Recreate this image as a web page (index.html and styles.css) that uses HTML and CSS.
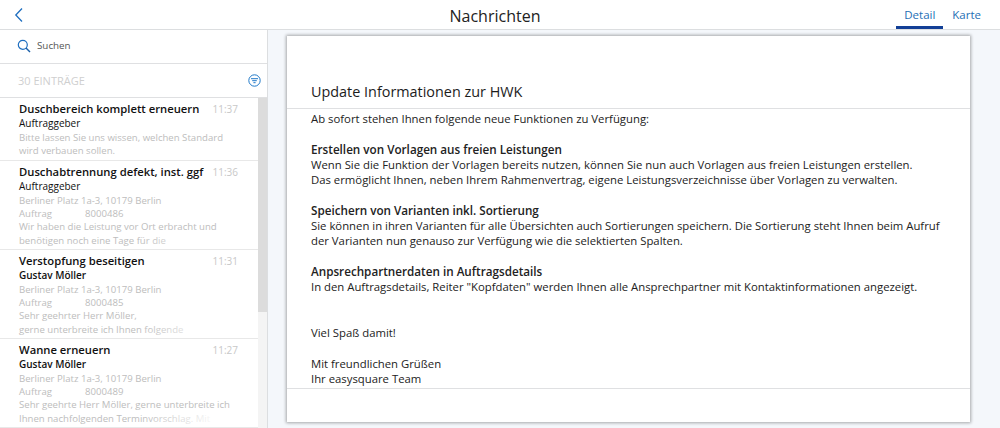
FILE: index.html
```html
<!DOCTYPE html>
<html lang="de">
<head>
<meta charset="utf-8">
<title>Nachrichten</title>
<link rel="stylesheet" href="styles.css">
</head>
<body>
<div class="app">
  <header class="topbar">
    <a class="back" aria-label="Zurück"><svg width="10" height="16" viewBox="0 0 10 16"><path d="M8 1.500 1.800 8 8 14.500" fill="none" stroke="#1f6fc0" stroke-width="1.300"/></svg></a>
    <h1 class="page-title">Nachrichten</h1>
    <nav class="tabs">
      <a class="tab active">Detail</a>
      <a class="tab">Karte</a>
    </nav>
  </header>
  <main class="main">
    <aside class="sidebar">
      <div class="search">
        <svg width="14" height="14" viewBox="0 0 14 14"><circle cx="5.800" cy="5.800" r="4.500" fill="none" stroke="#1f6fc0" stroke-width="1.200"/><path d="M9 9l4 4" stroke="#1a5fa8" stroke-width="1.500"/></svg>
        <span>Suchen</span>
      </div>
      <div class="count">
        <span>30 EINTRÄGE</span>
        <svg width="13" height="13" viewBox="0 0 13 13"><circle cx="6.500" cy="6.500" r="5.700" fill="none" stroke="#1f78c8" stroke-width="1"/><path d="M3 4.700h7M4.200 6.700h4.600M5.400 8.700h2.200" stroke="#1f78c8" stroke-width="1"/></svg>
      </div>
      <div class="list-wrap">
        <ul class="list">
          <li class="item item-short">
            <div class="item-head"><strong>Duschbereich komplett erneuern</strong><time>11:37</time></div>
            <div class="sender">Auftraggeber</div>
            <p>Bitte lassen Sie uns wissen, welchen Standard<br>wird verbauen sollen.</p>
          </li>
          <li class="item">
            <div class="item-head"><strong>Duschabtrennung defekt, inst. ggf</strong><time>11:36</time></div>
            <div class="sender">Auftraggeber</div>
            <p>Berliner Platz 1a-3, 10179 Berlin<br><span class="label">Auftrag</span>8000486<br>Wir haben die Leistung vor Ort erbracht und<br>benötigen noch eine Tage für die</p>
          </li>
          <li class="item">
            <div class="item-head"><strong>Verstopfung beseitigen</strong><time>11:31</time></div>
            <div class="sender strong-sender">Gustav Möller</div>
            <p>Berliner Platz 1a-3, 10179 Berlin<br><span class="label">Auftrag</span>8000485<br>Sehr geehrter Herr Möller,<br>gerne unterbreite ich Ihnen folgende</p>
          </li>
          <li class="item">
            <div class="item-head"><strong>Wanne erneuern</strong><time>11:27</time></div>
            <div class="sender strong-sender">Gustav Möller</div>
            <p>Berliner Platz 1a-3, 10179 Berlin<br><span class="label">Auftrag</span>8000489<br>Sehr geehrte Herr Möller, gerne unterbreite ich<br>Ihnen nachfolgenden Terminvorschlag. Mit</p>
          </li>
        </ul>
        <div class="scrollbar"><div class="thumb"></div></div>
      </div>
    </aside>
    <section class="content">
      <article class="card">
        <h2 class="card-title">Update Informationen zur HWK</h2>
        <div class="card-body">
          <p>Ab sofort stehen Ihnen folgende neue Funktionen zu Verfügung:</p>
          <p><b>Erstellen von Vorlagen aus freien Leistungen</b><br>Wenn Sie die Funktion der Vorlagen bereits nutzen, können Sie nun auch Vorlagen aus freien Leistungen erstellen.<br>Das ermöglicht Ihnen, neben Ihrem Rahmenvertrag, eigene Leistungsverzeichnisse über Vorlagen zu verwalten.</p>
          <p><b>Speichern von Varianten inkl. Sortierung</b><br>Sie können in ihren Varianten für alle Übersichten auch Sortierungen speichern. Die Sortierung steht Ihnen beim Aufruf<br>der Varianten nun genauso zur Verfügung wie die selektierten Spalten.</p>
          <p><b>Anpsrechpartnerdaten in Auftragsdetails</b><br>In den Auftragsdetails, Reiter "Kopfdaten" werden Ihnen alle Ansprechpartner mit Kontaktinformationen angezeigt.</p>
          <p class="gap-top">Viel Spaß damit!</p>
          <p>Mit freundlichen Grüßen<br>Ihr easysquare Team</p>
        </div>
      </article>
    </section>
  </main>
</div>
</body>
</html>
```
FILE: styles.css
```css
* { box-sizing: border-box; margin: 0; padding: 0; }
html, body { width: 1000px; height: 428px; overflow: hidden; background: #fff; }
body { font-family: "Open Sans", "Liberation Sans", sans-serif; color: #1c1c1c; }
.app { display: flex; flex-direction: column; height: 428px; }

.topbar { height: 30px; flex: none; display: flex; align-items: center; position: relative; border-bottom: 1px solid #dcdee0; padding-left: 14px; }
.back { display: flex; width: 10px; height: 16px; margin-top: 0; }
.page-title { position: absolute; right: 0; top: 4px; left: -10px; text-align: center; font-size: 16px; line-height: 24px; font-weight: 400; color: #222; pointer-events: none; }
.tabs { margin-left: auto; display: flex; height: 29px; padding-right: 19px; }
.tab { font-size: 11.500px; line-height: 16px; padding-top: 7px; color: #1f6fb5; }
.tab.active { width: 47px; text-align: center; border-bottom: 3px solid #123f96; margin-right: 9px; }

.main { flex: 1; display: flex; min-height: 0; background: #f4f7fb; }
.sidebar { width: 268px; flex: none; background: #fff; border-right: 1px solid #dcdee0; display: flex; flex-direction: column; }
.search { height: 34px; flex: none; display: flex; align-items: center; gap: 6px; padding: 0 0 3px 17px; font-size: 9.800px; color: #555; border-bottom: 1px solid #dfe0e2; }
.search svg { margin-top: 1px; }
.count { height: 34px; flex: none; display: flex; justify-content: space-between; align-items: center; padding: 0 6px 0 18px; font-size: 11px; color: #cfcfcf; border-bottom: 1px solid #dfe0e2; }

.list-wrap { flex: 1; display: flex; min-height: 0; overflow: hidden; }
.list { flex: 1; list-style: none; min-width: 0; }
.item { height: 89px; padding: 3px 10px 0 19px; border-bottom: 1px solid #e8e8e8; position: relative; }
.item-short { height: 63px; }
.item-head { display: flex; justify-content: space-between; align-items: baseline; padding-right: 10px; }
.item-head strong { font-size: 11.250px; line-height: 15px; font-weight: 600; color: #111; white-space: nowrap; }
.item-head time { font-size: 10px; color: #c8c8c8; }
.sender { font-size: 10px; line-height: 14px; color: #111; }
.strong-sender { font-weight: 600; }
.item p { margin-top: 1px; font-size: 9.600px; line-height: 13.200px; color: #bdbdbd; white-space: nowrap; }
.item::after { content: ""; position: absolute; left: 140px; right: 0; bottom: 1px; height: 14px; background: linear-gradient(90deg, rgba(255,255,255,0), #fff 70%); }
.item-short::after { display: none; }
.label { display: inline-block; width: 66px; }
.scrollbar { width: 9px; flex: none; background: #f4f4f4; }
.thumb { height: 214px; background: #dcdcdc; }

.content { flex: 1; min-width: 0; padding: 6px 30px 6px 19px; }
.card { height: 386px; background: #fff; box-shadow: 0 0 3px 1px rgba(0,0,0,.32); display: flex; flex-direction: column; }
.card-title { height: 73px; flex: none; padding: 46px 0 0 24px; font-size: 14.400px; line-height: 20px; font-weight: 400; color: #1c1c1c; border-bottom: 1px solid #dfe0e2; }
.card-body { height: 280px; flex: none; padding: 2px 0 0 24px; font-size: 11.330px; line-height: 15.300px; color: #222; border-bottom: 1px solid #dfe0e2; white-space: nowrap; }
.card-body p { margin-bottom: 15.300px; }
.card-body b { font-weight: 600; font-size: 11.700px; }
.gap-top { margin-top: 30.600px; }
```
